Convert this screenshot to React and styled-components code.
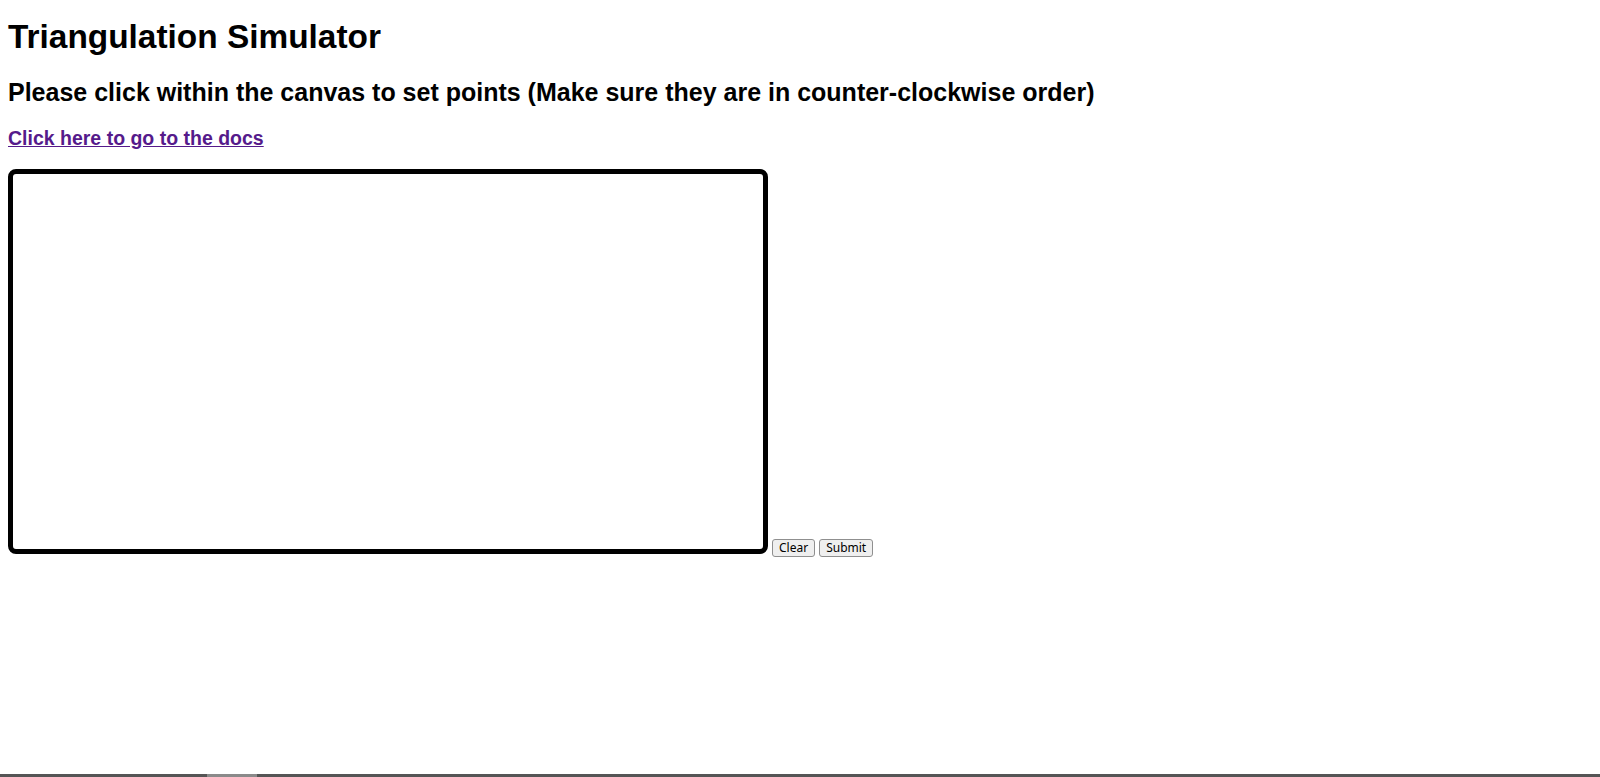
import React from "react";
import styled, { createGlobalStyle } from "styled-components";

const GlobalStyle = createGlobalStyle`
  html, body {
    background: #ffffff;
  }
  body {
    margin: 0;
    padding: 8px;
    font-family: "Liberation Sans", Arial, sans-serif;
    color: #000000;
  }
`;

const Title = styled.h1`
  font-size: 33.4px;
  line-height: 38px;
  font-weight: bold;
  margin: 10px 0 22px;
`;

const Instructions = styled.h2`
  font-size: 25px;
  line-height: 29px;
  font-weight: bold;
  margin: 0 0 20px;
`;

const DocsHeading = styled.h3`
  font-size: 19.5px;
  line-height: 22px;
  font-weight: bold;
  margin: 0 0 20px;
`;

const DocsLink = styled.a`
  color: #551a8b;
  text-decoration: underline;
`;

const Board = styled.div`
  line-height: normal;
`;

const Canvas = styled.canvas`
  border: 5px solid #000000;
  border-radius: 8px;
  vertical-align: baseline;
`;

const Button = styled.button`
  font-family: "Noto Sans", "Liberation Sans", sans-serif;
  font-size: 12px;
  line-height: 16px;
  margin: 0 0 0 4px;
  padding: 0 6px;
  height: 18px;
  vertical-align: 2px;
  background: #efefef;
  color: #000000;
  border: 1px solid #8f8f8f;
  border-radius: 3px;
`;

const ScrollTrack = styled.div`
  position: fixed;
  left: 0;
  right: 0;
  bottom: 0;
  height: 3px;
  background: #555555;
  display: flex;
`;

const ScrollThumb = styled.div`
  margin-left: 207px;
  width: 50px;
  height: 100%;
  background: #8a8a8a;
`;

export default function App() {
  return (
    <>
      <GlobalStyle />
      <Title>Triangulation Simulator</Title>
      <Instructions>
        Please click within the canvas to set points (Make sure they are in
        counter-clockwise order)
      </Instructions>
      <DocsHeading>
        <DocsLink href="#docs">Click here to go to the docs</DocsLink>
      </DocsHeading>
      <Board>
        <Canvas width={750} height={375} />
        <Button>Clear</Button>
        <Button>Submit</Button>
      </Board>
      <ScrollTrack>
        <ScrollThumb />
      </ScrollTrack>
    </>
  );
}
